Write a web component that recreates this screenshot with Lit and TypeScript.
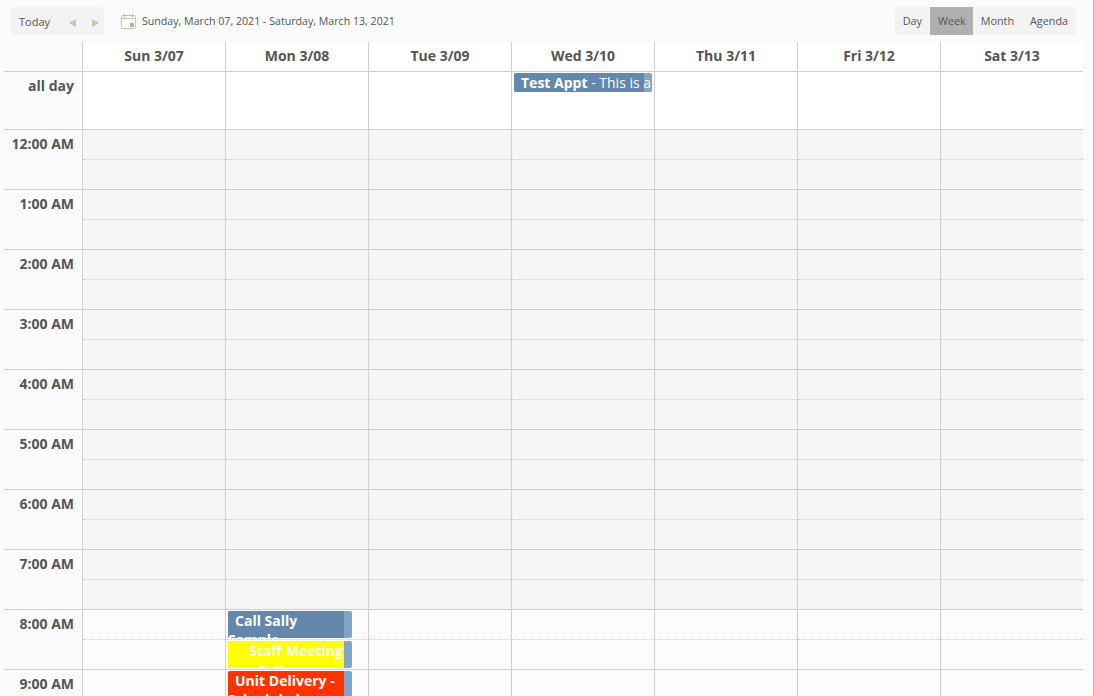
import { LitElement, html, css } from "lit";
import { customElement } from "lit/decorators.js";

const days = ["Sun 3/07", "Mon 3/08", "Tue 3/09", "Wed 3/10", "Thu 3/11", "Fri 3/12", "Sat 3/13"];
const hours = ["12:00 AM", "1:00 AM", "2:00 AM", "3:00 AM", "4:00 AM", "5:00 AM", "6:00 AM", "7:00 AM", "8:00 AM", "9:00 AM"];

@customElement("app-root")
export class AppRoot extends LitElement {
  static styles = css`
    :host { display: block; height: 696px; overflow: hidden; background: #fbfbfb; font-family: "Open Sans", sans-serif; color: #555; border-right: 1px solid #b5b5b5; box-sizing: border-box; }
    .toolbar { height: 42px; display: flex; align-items: flex-start; padding: 7px 17px 0 11px; box-sizing: border-box; }
    .group { height: 28px; display: flex; align-items: center; background: #f3f3f3; border-radius: 3px; font-size: 11px; color: #555; }
    .today { width: 93px; padding-left: 8px; box-sizing: border-box; }
    .today .label { flex: none; width: 50px; }
    .arrow { flex: none; width: 8px; height: 12px; margin-top: 4px; }
    .arrow.prev { margin-right: 15px; }
    .range { display: flex; align-items: center; height: 28px; margin-left: 17px; font-size: 10.63px; color: #555; gap: 6px; }
    .views { margin-left: auto; font-size: 10.8px; }
    .views span { height: 28px; line-height: 28px; padding: 0 8px; }
    .views span.on { background: #b0b0b0; padding: 0 7px 0 8px; }
    .grid { display: grid; width: 1080px; margin-left: 4px; grid-template-columns: 78px repeat(7, 143px); grid-auto-rows: min-content; }
    .head { box-sizing: border-box; height: 30px; border-left: 1px solid #cfcfcf; border-bottom: 1px solid #cfcfcf; background: #fff; font-size: 14px; font-weight: 700; color: #555; text-align: center; line-height: 28px; }
    .corner { height: 30px; box-sizing: border-box; border-bottom: 1px solid #cfcfcf; }
    .gut { box-sizing: border-box; padding: 4px 8px 0 0; text-align: right; font-size: 14px; font-weight: 700; color: #555; border-bottom: 1px solid #cfcfcf; height: 60px; line-height: 20px; }
    .gut.allday { height: 58px; }
    .cell { position: relative; box-sizing: border-box; border-left: 1px solid #cfcfcf; border-bottom: 1px solid #cfcfcf; height: 60px; display: flex; flex-direction: column; }
    .cell.allday { height: 58px; background: #fff; }
    .cell.off { background: #f5f5f5; }
    .cell.work { background: #fcfcfc; }
    .half { height: 30px; box-sizing: border-box; border-bottom: 1px dotted #d0d0d0; flex: none; }
    .ev { position: absolute; left: 2px; border-radius: 2px; background: #80a5c8; color: #fff; font-size: 14px; font-weight: 700; overflow: hidden; width: 124px; z-index: 1; }
    .ev .body { width: 116px; height: 100%; box-sizing: border-box; padding: 0 0 0 7px; line-height: 20px; background: #6488ab; }
    .ev .t2 { display: block; }
    .appt { top: 1px; width: 138px; height: 19px; white-space: nowrap; }
    .appt .body { width: 130px; line-height: 19px; }
    .appt .rest { font-weight: 400; }
    .call { top: 1px; height: 27px; }
    .call .t2 { margin-left: -7px; margin-top: -1px; }
    .staff { top: 31px; height: 27px; }
    .staff .body { background: #ffff00; padding-left: 21px; }
    .staff .t2 { margin-left: 9px; }
    .unit { top: 1px; height: 60px; }
    .unit .body { background: #ff3300; }
    .unit .t2 { margin-left: -7px; margin-top: -1px; }
  `;

  private eventsFor(hour: number, day: number) {
    if (day !== 1) return "";
    if (hour === 8) return html`
      <div class="ev call"><div class="body">Call Sally<span class="t2">Sample</span></div></div>
      <div class="ev staff"><div class="body">Staff Meeting<span class="t2">Full</span></div></div>`;
    if (hour === 9) return html`
      <div class="ev unit"><div class="body">Unit Delivery -<span class="t2">Scheduled</span></div></div>`;
    return "";
  }

  render() {
    return html`
      <div class="toolbar">
        <div class="group today">
          <span class="label">Today</span>
          <svg class="arrow prev" viewBox="0 0 8 12"><path d="M0 6l7-4v8z" fill="#c4c8ae"/></svg>
          <svg class="arrow" viewBox="0 0 8 12"><path d="M0 2l7 4-7 4z" fill="#c4c8ae"/></svg>
        </div>
        <div class="range">
          <svg width="15" height="16" viewBox="0 0 15 16" fill="none">
            <rect x="0.5" y="2.5" width="14" height="13" rx="1" stroke="#c8c8ac"/>
            <path d="M1 5.5h13" stroke="#c8c8ac"/>
            <path d="M3.5 1v3M11.5 1v3" stroke="#b4b498"/>
            <rect x="9" y="10" width="4" height="4" fill="#b4b498"/>
          </svg>
          <span>Sunday, March 07, 2021 - Saturday, March 13, 2021</span>
        </div>
        <div class="group views">
          <span>Day</span><span class="on">Week</span><span>Month</span><span>Agenda</span>
        </div>
      </div>
      <div class="grid">
        <div class="corner"></div>
        ${days.map((d) => html`<div class="head">${d}</div>`)}
        <div class="gut allday">all day</div>
        ${days.map((_, i) => html`<div class="cell allday">
          ${i === 3 ? html`<div class="ev appt"><div class="body">Test Appt<span class="rest"> - This is a</span></div></div>` : ""}
        </div>`)}
        ${hours.map((h, hi) => html`
          <div class="gut">${h}</div>
          ${days.map((_, i) => html`<div class="cell ${hi < 8 ? "off" : "work"}">
            <div class="half"></div>
            ${this.eventsFor(hi, i)}
          </div>`)}
        `)}
      </div>
    `;
  }
}
